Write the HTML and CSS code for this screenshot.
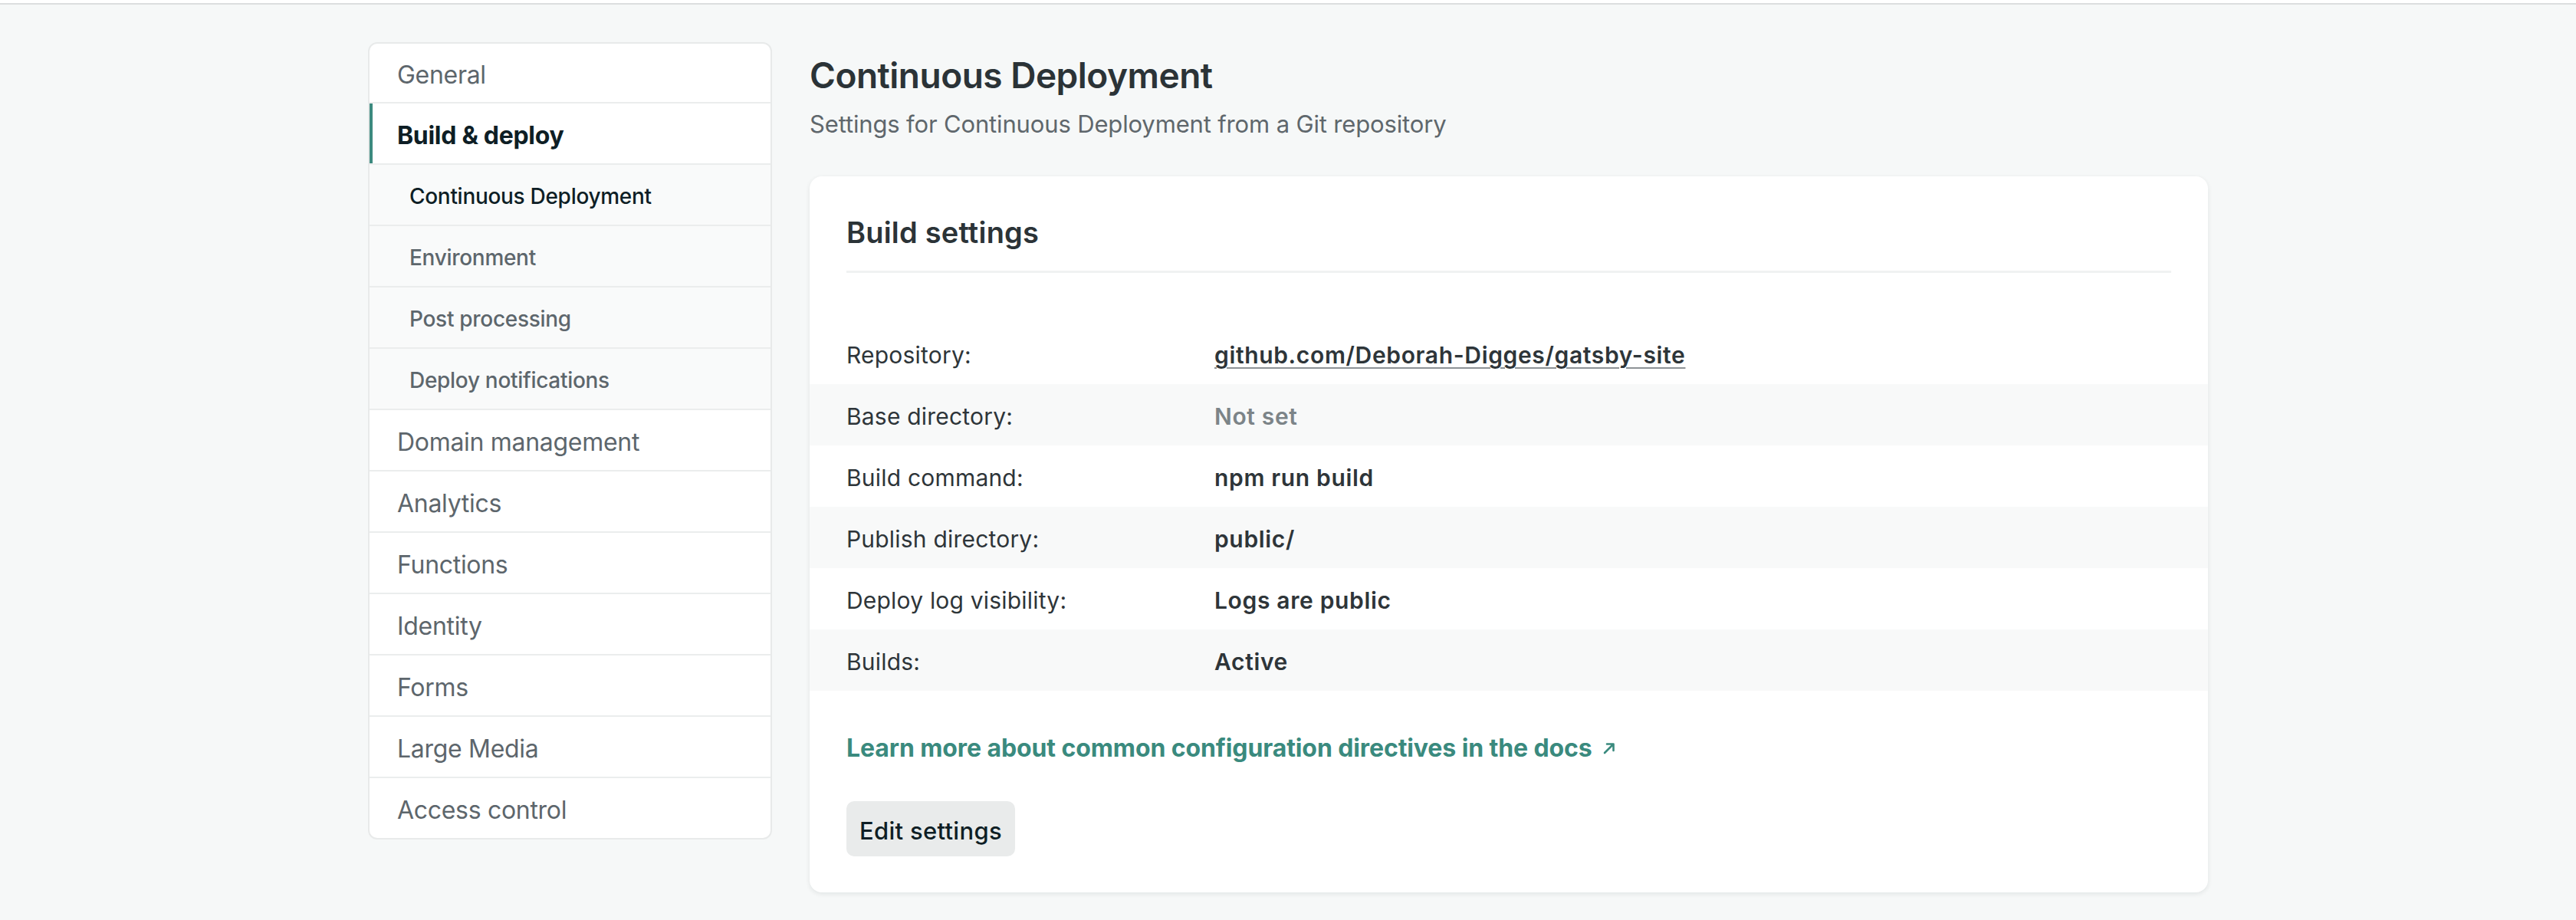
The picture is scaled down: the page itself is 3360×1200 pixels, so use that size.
FILE: index.html
```html
<!DOCTYPE html>
<html lang="en">
<head>
<meta charset="utf-8">
<title>Continuous Deployment</title>
<link rel="stylesheet" href="styles.css">
</head>
<body>
<div class="topbar"></div>
<div class="layout">
  <nav class="sidebar">
    <a class="nav-item">General</a>
    <a class="nav-item active">Build &amp; deploy</a>
    <a class="nav-sub current">Continuous Deployment</a>
    <a class="nav-sub">Environment</a>
    <a class="nav-sub">Post processing</a>
    <a class="nav-sub">Deploy notifications</a>
    <a class="nav-item">Domain management</a>
    <a class="nav-item">Analytics</a>
    <a class="nav-item">Functions</a>
    <a class="nav-item">Identity</a>
    <a class="nav-item">Forms</a>
    <a class="nav-item">Large Media</a>
    <a class="nav-item last">Access control</a>
  </nav>
  <main class="main">
    <h1 class="page-title">Continuous Deployment</h1>
    <p class="page-sub">Settings for Continuous Deployment from a Git repository</p>
    <section class="card">
      <div class="card-head">
        <h2 class="card-title">Build settings</h2>
      </div>
      <dl class="settings">
        <div class="row"><dt>Repository:</dt><dd><a class="repo">github.com/Deborah-Digges/gatsby-site</a></dd></div>
        <div class="row"><dt>Base directory:</dt><dd class="muted">Not set</dd></div>
        <div class="row"><dt>Build command:</dt><dd>npm run build</dd></div>
        <div class="row"><dt>Publish directory:</dt><dd>public/</dd></div>
        <div class="row"><dt>Deploy log visibility:</dt><dd>Logs are public</dd></div>
        <div class="row"><dt>Builds:</dt><dd>Active</dd></div>
      </dl>
      <div class="card-foot">
        <a class="docs-link">Learn more about common configuration directives in the docs<svg class="ext" viewBox="0 0 18 18" width="18" height="18" aria-hidden="true"><path d="M3 15 L14 4 M6 3.5 H14.5 V12" fill="none" stroke="currentColor" stroke-width="2.6" stroke-linecap="round" stroke-linejoin="round"/></svg></a>
        <button class="btn">Edit settings</button>
      </div>
    </section>
  </main>
</div>
</body>
</html>
```

FILE: styles.css
```css
* { box-sizing: border-box; }
html, body { margin: 0; padding: 0; }
body {
  background: #f6f8f8;
  font-family: Inter, "Noto Sans", "Liberation Sans", sans-serif;
  color: #2e3539;
  min-height: 1200px;
}
.topbar {
  height: 6px;
  background: #ffffff;
  border-bottom: 2px solid #dcdedf;
}
.layout {
  display: flex;
  align-items: flex-start;
  gap: 49px;
  padding: 49px 0 0 480px;
}
.sidebar {
  width: 527px;
  flex: none;
  display: flex;
  flex-direction: column;
  background: #ffffff;
  border: 2px solid #e8eaea;
  border-radius: 12px;
  overflow: hidden;
}
.nav-item, .nav-sub {
  display: flex;
  flex: none;
  align-items: center;
  height: 80px;
  border-bottom: 2px solid #ebeded;
  padding: 4px 0 0 36px;
  font-size: 32px;
  color: #5d666c;
  text-decoration: none;
  letter-spacing: -0.3px;
}
.nav-item:first-child { height: 78px; }
.nav-item.last { border-bottom: none; height: 78px; }
.nav-item.active {
  font-weight: 700;
  color: #0e1e25;
  box-shadow: inset 4px 0 0 #3d8a7f;
}
.nav-sub {
  background: #f9fafa;
  padding-left: 52px;
  font-size: 28px;
  font-weight: 500;
}
.nav-sub.current { color: #0e1e25; }

.main {
  width: 1824px;
  flex: none;
}
.page-title {
  margin: 15px 0 0;
  font-size: 46px;
  line-height: 56px;
  font-weight: 600;
  color: #2b3337;
  letter-spacing: -0.5px;
}
.page-sub {
  margin: 14px 0 0;
  font-size: 31px;
  line-height: 44px;
  color: #5f676c;
  letter-spacing: -0.15px;
}
.card {
  margin-top: 46px;
  background: #ffffff;
  border-radius: 16px;
  box-shadow: 0 2px 6px rgba(14, 30, 37, 0.09);
  padding: 51px 0 47px;
}
.card-head {
  margin: 0 48px;
  border-bottom: 3px solid #f0f2f2;
  padding-bottom: 28px;
}
.card-title {
  margin: 0;
  font-size: 38px;
  line-height: 44px;
  font-weight: 600;
  color: #2b3337;
  letter-spacing: 0.2px;
}
.settings {
  margin: 65px 0 0;
}
.row {
  display: grid;
  grid-template-columns: 480px 1fr;
  align-items: center;
  height: 80px;
  padding: 4px 48px 0;
}
.row:nth-child(even) { background: #f8f9f9; }
.row dt {
  font-size: 30px;
  color: #2e3539;
  letter-spacing: 0.2px;
}
.row dd {
  margin: 0;
  font-size: 30px;
  font-weight: 600;
  color: #2e3539;
  letter-spacing: 0.65px;
}
.row dd.muted { color: #7c8488; }
.repo {
  color: #2e3539;
  text-decoration: underline;
  text-decoration-color: #8d9396;
  text-decoration-thickness: 2px;
  text-underline-offset: 5px;
}
.card-foot {
  padding: 51px 48px 0;
  display: flex;
  flex-direction: column;
  align-items: flex-start;
  gap: 45px;
}
.docs-link {
  display: inline-flex;
  align-items: center;
  gap: 13px;
  font-size: 32px;
  line-height: 48px;
  font-weight: 700;
  color: #3a8a7e;
  letter-spacing: -0.1px;
  text-decoration: none;
}
.ext { flex: none; }
.btn {
  height: 72px;
  padding: 4px 17px 0;
  border: none;
  border-radius: 10px;
  background: #e9ebeb;
  font-family: inherit;
  font-size: 31px;
  font-weight: 500;
  color: #0e1e25;
  letter-spacing: 0.3px;
}
```
